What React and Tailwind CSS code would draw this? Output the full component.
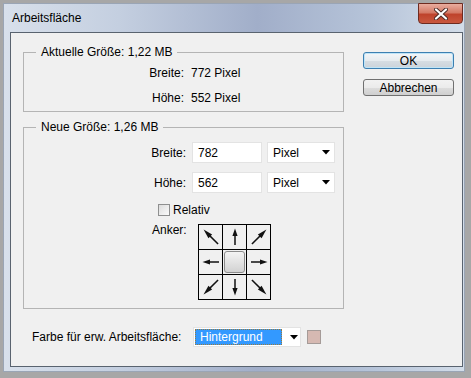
import React from "react";

function Arrow({ angle }) {
  const long = angle % 90 !== 0;
  return (
    <svg width="22" height="22" viewBox="0 0 22 22">
      <g transform={`rotate(${angle} 11 11)`}>
        <line x1="11" y1={long ? 21 : 19} x2="11" y2="8" stroke="#111" strokeWidth="1.5" />
        <polygon points={long ? "11,0.5 8.4,10 13.6,10" : "11,2.5 8.4,10 13.6,10"} fill="#111" />
      </g>
    </svg>
  );
}

function Caret() {
  return (
    <svg width="8" height="5" viewBox="0 0 8 5">
      <polygon points="0,0 8,0 4,4.5" fill="#000" />
    </svg>
  );
}

function Select({ label, className = "" }) {
  return (
    <div className={`flex h-[21px] items-center justify-between border border-[#e3e3e3] bg-white pl-[5px] pr-[4px] ${className}`}>
      <span>{label}</span>
      <Caret />
    </div>
  );
}

const arrows = [-45, 0, 45, -90, null, 90, -135, 180, 135];

export default function App() {
  return (
    <div className="h-[378px] w-[471px] overflow-hidden bg-[#a7a7a7] pl-[3px] pt-[3px] font-['Liberation_Sans',Arial,sans-serif] text-[12px] leading-[14px] text-black">
      <div className="relative flex h-[369px] w-[462px] flex-col border border-[#9aa5b5] bg-[linear-gradient(90deg,#d8e0eb_0%,#c4cfe0_25%,#a1aec9_55%,#b6c4d9_80%,#d3dde9_100%)]">
        {/* title bar */}
        <div className="flex h-[28px] items-center pl-[8px] text-[12px]">Arbeitsfläche</div>
        <div className="absolute right-[1px] top-[-1px] flex h-[21px] w-[45px] items-center justify-center rounded-b-[4px] border border-[#6e2b20] bg-[linear-gradient(180deg,#e9ad9f_0%,#d47a66_45%,#bf432c_55%,#c9583f_100%)]">
          <svg width="14" height="12" viewBox="0 0 14 12">
            <path d="M2 1.5 L12 10.5 M12 1.5 L2 10.5" stroke="#4a2a25" strokeWidth="4" strokeLinecap="round" />
            <path d="M2 1.5 L12 10.5 M12 1.5 L2 10.5" stroke="#fff" strokeWidth="2.2" strokeLinecap="round" />
          </svg>
        </div>

        {/* client area */}
        <div className="ml-[6px] flex h-[335px] w-[453px] flex-col border border-[#59636f] bg-[#f0f0f0]">
          <div className="flex">
            <div className="ml-[12px] w-[321px] pt-[12px]">
              <fieldset className="border border-[#b4b4b4] pb-[6px]">
                <legend className="ml-[12px] px-[5px]">Aktuelle Größe: 1,22 MB</legend>
                <div className="mt-[7px] flex">
                  <span className="w-[160px] text-right">Breite:</span>
                  <span className="ml-[7px]">772 Pixel</span>
                </div>
                <div className="mt-[11px] flex">
                  <span className="w-[160px] text-right">Höhe:</span>
                  <span className="ml-[7px]">552 Pixel</span>
                </div>
              </fieldset>

              <fieldset className="mt-[8px] border border-[#b4b4b4] pb-[8px]">
                <legend className="ml-[12px] px-[5px]">Neue Größe: 1,26 MB</legend>
                <div className="mt-[8px] flex items-center">
                  <span className="w-[162px] text-right">Breite:</span>
                  <div className="ml-[6px] flex h-[21px] w-[70px] items-center border border-[#e3e3e3] bg-white pl-[5px]">782</div>
                  <Select label="Pixel" className="ml-[5px] w-[68px]" />
                </div>
                <div className="mt-[9px] flex items-center">
                  <span className="w-[162px] text-right">Höhe:</span>
                  <div className="ml-[6px] flex h-[21px] w-[70px] items-center border border-[#e3e3e3] bg-white pl-[5px]">562</div>
                  <Select label="Pixel" className="ml-[5px] w-[68px]" />
                </div>
                <div className="mt-[10px] flex h-[14px] items-center">
                  <div className="ml-[134px] h-[12px] w-[12px] border border-[#8e8f8f] bg-[linear-gradient(135deg,#dcdcdc,#fbfbfb)]" />
                  <span className="ml-[3px]">Relativ</span>
                </div>
                <div className="mt-[7px] flex items-start">
                  <span className="ml-[128px] w-[35px] leading-[12px]">Anker:</span>
                  <div className="ml-[11px] grid grid-cols-[repeat(3,23px)] grid-rows-[repeat(3,24px)] gap-px bg-black p-px">
                    {arrows.map((a, i) =>
                      a === null ? (
                        <div key={i} className="bg-[#f0f0f0] p-px">
                          <div className="h-full w-full rounded-[3px] border border-[#8c8c8c] bg-[linear-gradient(180deg,#f4f4f4,#d2d2d2)]" />
                        </div>
                      ) : (
                        <div key={i} className="flex items-center justify-center bg-[#f0f0f0]">
                          <Arrow angle={a} />
                        </div>
                      )
                    )}
                  </div>
                </div>
              </fieldset>
            </div>

            <div className="ml-[19px] flex flex-col pt-[19px]">
              <button className="flex h-[17px] w-[91px] items-center justify-center rounded-[3px] border border-[#3c7fb1] bg-[linear-gradient(180deg,#f3f6f8_0%,#e6ebef_50%,#d6dde3_51%,#cbd3da_100%)] shadow-[inset_0_0_0_1px_#bfe4f7]">
                OK
              </button>
              <button className="mt-[10px] flex h-[17px] w-[91px] items-center justify-center rounded-[3px] border border-[#707070] bg-[linear-gradient(180deg,#f2f2f2_0%,#ebebeb_50%,#dddddd_51%,#cfcfcf_100%)]">
                Abbrechen
              </button>
            </div>
          </div>

          <div className="ml-[21px] mt-[18px] flex h-[20px] items-center">
            <span className="w-[161px]">Farbe für erw. Arbeitsfläche:</span>
            <div className="flex h-[20px] w-[108px] items-center border border-[#e3e3e3] bg-white pl-[1px]">
              <div className="flex h-[16px] w-[87px] items-center border border-dotted border-[#9a7a3a] bg-[#3399ff] pl-[4px] text-white">
                Hintergrund
              </div>
              <div className="ml-[8px]">
                <Caret />
              </div>
            </div>
            <div className="ml-[6px] h-[14px] w-[14px] border border-[#a59b98] bg-[#d6b9b2]" />
          </div>
        </div>
      </div>
    </div>
  );
}
